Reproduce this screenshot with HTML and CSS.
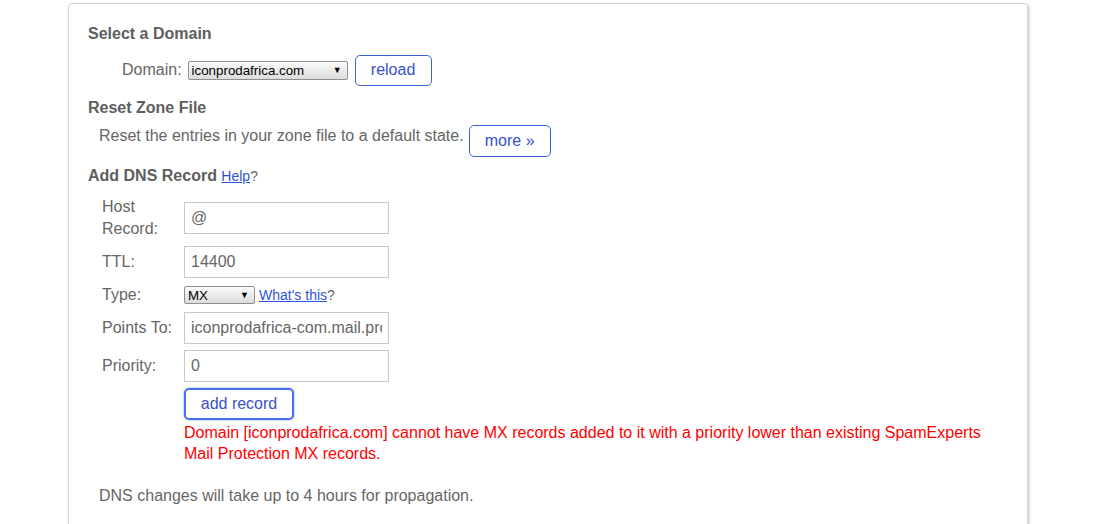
FILE: index.html
```html
<!DOCTYPE html>
<html>
<head>
<meta charset="utf-8">
<link rel="stylesheet" href="styles.css">
</head>
<body>
<div class="card">
  <h3 class="title">Select a Domain</h3>
  <div class="domain-row">
    <span class="lbl">Domain:</span>
    <span class="sel sel-domain"><select><option>iconprodafrica.com</option></select></span>
    <button class="btn btn-reload">reload</button>
  </div>
  <h3 class="title t-reset">Reset Zone File</h3>
  <div class="reset-row">
    <span>Reset the entries in your zone file to a default state.</span>
    <button class="btn btn-more">more »</button>
  </div>
  <h3 class="title t-add">Add DNS Record <a class="link" href="#">Help</a><span class="q">?</span></h3>
  <div class="form">
    <div class="cell lab lab-host">Host<br>Record:</div>
    <div class="cell"><input class="inp" value="@"></div>
    <div class="cell lab">TTL:</div>
    <div class="cell"><input class="inp" value="14400"></div>
    <div class="cell lab">Type:</div>
    <div class="cell type-cell"><span class="sel sel-type"><select><option>MX</option></select></span> <a class="link" href="#">What's this</a><span class="q">?</span></div>
    <div class="cell lab">Points To:</div>
    <div class="cell"><input class="inp" value="iconprodafrica-com.mail.protection.outlook.com"></div>
    <div class="cell lab">Priority:</div>
    <div class="cell"><input class="inp" value="0"></div>
    <div class="cell"></div>
    <div class="cell"><button class="btn btn-add">add record</button></div>
    <div></div>
    <div class="error">Domain [iconprodafrica.com] cannot have MX records added to it with a priority lower than existing SpamExperts Mail Protection MX records.</div>
  </div>
  <p class="note">DNS changes will take up to 4 hours for propagation.</p>
</div>
</body>
</html>
```
FILE: styles.css
```css
html, body {
  margin: 0;
  padding: 0;
  background: #fff;
}
body {
  font-family: "Liberation Sans", Arial, sans-serif;
  font-size: 16px;
  color: #666;
  overflow: hidden;
}
.card {
  margin: 3px 0 0 68px;
  width: 919px;
  height: 560px;
  border: 1px solid #d6d6d6;
  border-radius: 4px;
  box-shadow: 1px 1px 3px rgba(0,0,0,0.25);
  padding: 20px 20px 0 19px;
  box-sizing: content-box;
}
.title {
  margin: 0;
  font-size: 16px;
  line-height: 20px;
  font-weight: bold;
  color: #5e5e5e;
}
.domain-row {
  display: flex;
  align-items: center;
  margin-top: 11px;
  padding-left: 34px;
  height: 30px;
}
.lbl {
  line-height: 20px;
  margin-right: 6px;
}
.sel {
  position: relative;
  display: inline-block;
  vertical-align: middle;
}
.sel select {
  -webkit-appearance: none;
  appearance: none;
  display: block;
  box-sizing: border-box;
  border: 1px solid #8f8f8f;
  border-radius: 2px;
  background: linear-gradient(#fbfbfb, #dcdcdc);
  font-family: "Liberation Sans", Arial, sans-serif;
  font-size: 13.33px;
  color: #000;
  padding: 0 0 0 3px;
  margin: 0;
  outline: none;
}
.sel::after {
  content: "▼";
  position: absolute;
  right: 6px;
  top: 50%;
  transform: translateY(-50%);
  font-size: 9px;
  color: #000;
  pointer-events: none;
}
.sel-domain select {
  width: 160px;
  height: 19px;
}
.sel-type select {
  width: 71px;
  height: 18px;
}
.btn {
  box-sizing: border-box;
  background: #fff;
  border: 1px solid #3b63d9;
  border-radius: 5px;
  color: #3752c9;
  font-family: "Liberation Sans", Arial, sans-serif;
  font-size: 16px;
  padding: 0;
  margin: 0;
  cursor: pointer;
}
.btn-reload {
  width: 77px;
  height: 31px;
  margin-left: 7px;
}
.t-reset {
  margin-top: 13px;
}
.reset-row {
  display: flex;
  align-items: flex-start;
  margin-top: 7px;
  padding-left: 11px;
  line-height: 20px;
}
.reset-row span {
  padding-top: 1px;
}
.btn-more {
  width: 82px;
  height: 32px;
  margin-left: 5px;
}
.t-add {
  margin-top: 9px;
}
.link {
  font-weight: normal;
  font-size: 14px;
  color: #2b55d6;
  text-decoration: underline;
}
.q {
  font-weight: normal;
  font-size: 14px;
  color: #666;
}
.form {
  display: grid;
  grid-template-columns: 96px 1fr;
  margin-top: 7px;
}
.cell {
  display: flex;
  align-items: center;
  padding: 3px 0;
  line-height: 22px;
}
.lab {
  padding-left: 14px;
}
.inp {
  box-sizing: border-box;
  width: 205px;
  height: 32px;
  border: 1px solid #c8c8c8;
  border-radius: 0;
  padding: 0 6px;
  font-family: "Liberation Sans", Arial, sans-serif;
  font-size: 16px;
  color: #666;
  margin: 0;
  outline: none;
}
.type-cell {
  gap: 4px;
}
.type-cell .q {
  margin-left: -4px;
}
.btn-add {
  width: 110px;
  height: 32px;
  border: 2px solid #4a73e8;
  box-shadow: 0 0 0 1px rgba(90,130,240,0.25);
}
.error {
  color: #ff0000;
  line-height: 21px;
  margin-top: -1px;
}
.note {
  margin: 22px 0 0 11px;
  line-height: 20px;
}
```
